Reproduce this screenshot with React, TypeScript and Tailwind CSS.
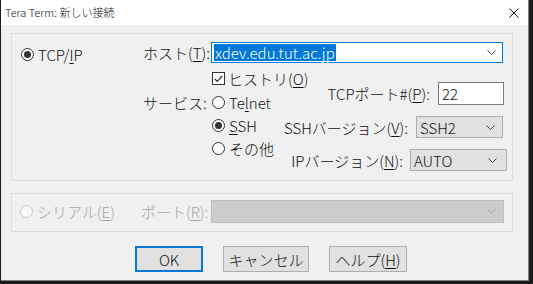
import React from "react";

function U({ children }: { children: React.ReactNode }) {
  return <span className="underline underline-offset-[2px] decoration-1">{children}</span>;
}

function Radio({ checked = false, disabled = false }: { checked?: boolean; disabled?: boolean }) {
  return (
    <span
      className={
        disabled
          ? "w-[13px] h-[13px] rounded-full border border-[#c8c8c8] bg-[#f7f7f7] flex items-center justify-center shrink-0"
          : "w-[13px] h-[13px] rounded-full border border-[#333333] bg-white flex items-center justify-center shrink-0"
      }
    >
      {checked && <span className="w-[7px] h-[7px] rounded-full bg-[#333333]" />}
    </span>
  );
}

function Checkbox() {
  return (
    <span className="w-[13px] h-[13px] border border-[#333333] bg-white flex items-center justify-center shrink-0">
      <svg width="9" height="8" viewBox="0 0 9 8">
        <polyline points="0.8,4 3.3,6.5 8.2,1" fill="none" stroke="#333333" strokeWidth="1.2" />
      </svg>
    </span>
  );
}

function Chevron({ color = "#444444" }: { color?: string }) {
  return (
    <svg width="9" height="5" viewBox="0 0 9 5" className="shrink-0">
      <polyline points="0.5,0.5 4.5,4.5 8.5,0.5" fill="none" stroke={color} strokeWidth="1" />
    </svg>
  );
}

export default function App() {
  return (
    <div className="w-[533px] h-[284px] bg-[#1b1b1b] flex [font-family:'Noto_Sans_CJK_JP',sans-serif] font-light text-[#111] overflow-hidden">
      <div className="ml-[1px] w-[528px] h-[281px] bg-[#f0f0f0] border-r border-b border-[#808080] flex flex-col">
        {/* title bar */}
        <div className="h-[25px] shrink-0 bg-white flex items-center justify-between pl-[4px] pr-[9px] text-[11px] leading-none">
          <span>Tera Term: 新しい接続</span>
          <svg width="10" height="10" viewBox="0 0 10 10">
            <line x1="0.5" y1="0.5" x2="9.5" y2="9.5" stroke="#111" strokeWidth="1" />
            <line x1="9.5" y1="0.5" x2="0.5" y2="9.5" stroke="#111" strokeWidth="1" />
          </svg>
        </div>

        <div className="pl-[10px] text-[15px] leading-none">
          {/* TCP/IP group */}
          <div className="mt-[8px] w-[502px] h-[148px] border border-[#dcdcdc] flex">
            <div className="w-[131px] shrink-0 pl-[9px] pt-[9px]">
              <div className="h-[23px] flex items-center gap-[4px]">
                <Radio checked />
                <span>
                  TCP/<U>I</U>P
                </span>
              </div>
            </div>
            <div className="flex-1 min-w-0 flex flex-col">
              <div className="mt-[8px] h-[21px] flex items-center">
                <span className="w-[65px] shrink-0 whitespace-nowrap">
                  ホスト(<U>T</U>):
                </span>
                <div className="ml-[3px] w-[292px] shrink-0 h-[21px] border border-[#0078d7] bg-white flex items-center pl-[2px] pr-[6px]">
                  <span className="bg-[#0078d7] text-white leading-[17px] px-[1px]">xdev.edu.tut.ac.jp</span>
                  <span className="ml-auto">
                    <Chevron />
                  </span>
                </div>
              </div>
              <div className="flex">
                <div className="w-[144px] shrink-0 flex flex-col">
                  <div className="mt-[7px] h-[17px] flex items-center ml-[69px] gap-[3px] whitespace-nowrap">
                    <Checkbox />
                    <span>
                      ヒストリ(<U>O</U>)
                    </span>
                  </div>
                  <div className="mt-[4px] h-[23px] flex items-center">
                    <span className="w-[65px] shrink-0 whitespace-nowrap">サービス:</span>
                    <span className="ml-[4px] flex items-center gap-[4px]">
                      <Radio />
                      <span>
                        Te<U>l</U>net
                      </span>
                    </span>
                  </div>
                  <div className="h-[23px] flex items-center">
                    <span className="w-[65px] shrink-0" />
                    <span className="ml-[4px] flex items-center gap-[4px]">
                      <Radio checked />
                      <span>
                        <U>S</U>SH
                      </span>
                    </span>
                  </div>
                  <div className="h-[23px] flex items-center">
                    <span className="w-[65px] shrink-0" />
                    <span className="ml-[4px] flex items-center gap-[4px] whitespace-nowrap">
                      <Radio />
                      <span>その他</span>
                    </span>
                  </div>
                </div>
                <div className="flex-1 min-w-0 flex flex-col items-end">
                  <div className="mt-[19px] mr-[8px] flex items-center gap-[8px] whitespace-nowrap">
                    <span>
                      TCPポート#(<U>P</U>):
                    </span>
                    <div className="w-[66px] shrink-0 h-[23px] border border-[#7a7a7a] bg-white flex items-center pl-[3px]">22</div>
                  </div>
                  <div className="mt-[11px] mr-[9px] flex items-center gap-[8px] whitespace-nowrap">
                    <span>
                      SSHバージョン(<U>V</U>):
                    </span>
                    <div className="w-[87px] shrink-0 h-[22px] border border-[#adadad] bg-[#e1e1e1] flex items-center justify-between pl-[3px] pr-[7px]">
                      <span>SSH2</span>
                      <Chevron />
                    </div>
                  </div>
                  <div className="mt-[11px] mr-[5px] flex items-center gap-[7px] whitespace-nowrap">
                    <span>
                      IPバージョン(<U>N</U>):
                    </span>
                    <div className="w-[97px] shrink-0 h-[22px] border border-[#adadad] bg-[#e1e1e1] flex items-center justify-between pl-[3px] pr-[9px]">
                      <span>AUTO</span>
                      <Chevron />
                    </div>
                  </div>
                </div>
              </div>
            </div>
          </div>

          {/* Serial group */}
          <div className="mt-[12px] w-[502px] h-[39px] border border-[#dcdcdc] flex items-start">
            <div className="mt-[6px] h-[23px] flex items-center text-[#a3a3a3]">
              <div className="w-[129px] shrink-0 pl-[8px] flex items-center gap-[4px] whitespace-nowrap">
                <Radio disabled />
                <span>
                  シリアル(<U>E</U>)
                </span>
              </div>
              <span className="w-[70px] shrink-0 whitespace-nowrap">
                ポート(<U>R</U>):
              </span>
              <div className="w-[293px] shrink-0 h-[23px] border border-[#bfbfbf] bg-[#cccccc] flex items-center justify-end pr-[7px]">
                <Chevron color="#9a9a9a" />
              </div>
            </div>
          </div>

          {/* buttons */}
          <div className="mt-[14px] pl-[124px] flex gap-[20px]">
            <button className="w-[68px] h-[26px] border-2 border-[#0078d7] bg-[#e1e1e1] flex items-center justify-center">OK</button>
            <button className="w-[86px] h-[26px] border border-[#adadad] bg-[#e1e1e1] flex items-center justify-center">キャンセル</button>
            <button className="w-[78px] h-[26px] border border-[#adadad] bg-[#e1e1e1] flex items-center justify-center">
              ヘルプ(<U>H</U>)
            </button>
          </div>
        </div>
      </div>
    </div>
  );
}
